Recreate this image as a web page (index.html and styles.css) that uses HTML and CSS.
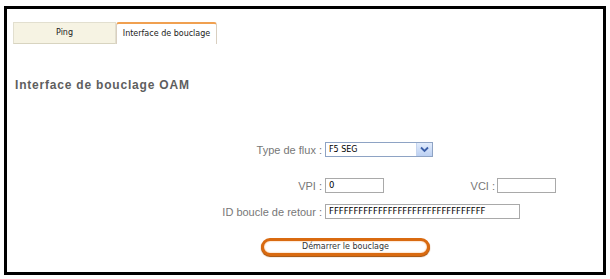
FILE: index.html
```html
<!DOCTYPE html>
<html lang="fr">
<head>
  <meta charset="UTF-8" />
  <title>Interface de bouclage</title>
  <link rel="stylesheet" href="styles.css">
</head>
<body>
  <div class="panel">
    <div class="tabs">
      <div class="tab">Ping</div>
      <div class="tab active">Interface de bouclage</div>
    </div>

    <h2>Interface de bouclage OAM</h2>

    <div class="row first">
      <label class="lbl">Type de flux :</label>
      <div class="select">
        <span>F5 SEG</span>
        <span class="arrow">
          <svg width="9" height="7" viewBox="0 0 9 7"><path d="M1 1.5 L4.5 5 L8 1.5" fill="none" stroke="#3b5fa8" stroke-width="1.8"/></svg>
        </span>
      </div>
    </div>

    <div class="row">
      <label class="lbl">VPI :</label>
      <div class="field small">0</div>
      <label class="lbl vci">VCI :</label>
      <div class="field small"></div>
    </div>

    <div class="row id">
      <label class="lbl">ID boucle de retour :</label>
      <div class="field wide">FFFFFFFFFFFFFFFFFFFFFFFFFFFFFFFF</div>
    </div>

    <div class="actions">
      <button class="btn">Démarrer le bouclage</button>
    </div>
  </div>
</body>
</html>
```

FILE: styles.css
```css
body {
  margin: 0;
  background: #fff;
  font-family: "Liberation Sans", Arial, sans-serif;
}
.panel {
  margin: 6px 0 0 4px;
  width: 602px;
  height: 269px;
  box-sizing: border-box;
  border: 3px solid #000;
}
.tabs {
  display: flex;
  margin: 13px 0 0 6px;
}
.tab {
  width: 103px;
  height: 22px;
  box-sizing: border-box;
  border: 1px solid #e2dfcf;
  border-bottom-color: #d8d4c0;
  background: #f6f3e3;
  font-family: "DejaVu Sans", Verdana, sans-serif;
  font-size: 8px;
  color: #222;
  text-align: center;
  line-height: 20px;
}
.tab.active {
  width: 101px;
  background: #fff;
  border: 1px solid #d9cfc0;
  border-top: 2px solid #f0a050;
  border-bottom: none;
  border-radius: 3px 3px 0 0;
  line-height: 19px;
}
h2 {
  margin: 34px 0 0 8px;
  font-size: 12px;
  color: #5e5e5e;
  letter-spacing: 0.8px;
}
.row {
  display: flex;
  align-items: center;
  height: 15px;
  margin-top: 21px;
}
.row.first {
  margin-top: 50px;
}
.row.id {
  margin-top: 11px;
}
.lbl {
  width: 315px;
  text-align: right;
  font-size: 11px;
  color: #777;
  margin-right: 3px;
}
.lbl.vci {
  width: 111px;
  margin-right: 2px;
}
.select {
  width: 108px;
  height: 15px;
  box-sizing: border-box;
  border: 1px solid #8ea3c4;
  display: flex;
  align-items: center;
  justify-content: space-between;
  padding-left: 3px;
  font-family: "DejaVu Sans", Verdana, sans-serif;
  font-size: 8px;
  color: #000;
}
.arrow {
  width: 15px;
  height: 13px;
  background: linear-gradient(#e2ecfc, #bcd0f2);
  border-left: 1px solid #c5d4ee;
  display: flex;
  align-items: center;
  justify-content: center;
}
.field {
  height: 15px;
  box-sizing: border-box;
  border: 1px solid #a9a9a9;
  padding-left: 3px;
  font-family: "DejaVu Sans", Verdana, sans-serif;
  font-size: 8.5px;
  line-height: 13px;
  color: #000;
}
.field.small {
  width: 59px;
}
.field.wide {
  width: 195px;
}
.actions {
  margin: 16px 0 0 254px;
}
.btn {
  width: 169px;
  height: 18px;
  border: 3px solid #d96a10;
  border-radius: 9px;
  background: #fff;
  box-shadow: 0 1px 1px #a04a00, inset 0 0 2px #f8b070;
  font-family: "DejaVu Sans", Verdana, sans-serif;
  font-size: 8px;
  color: #333;
  padding: 0;
}
```
